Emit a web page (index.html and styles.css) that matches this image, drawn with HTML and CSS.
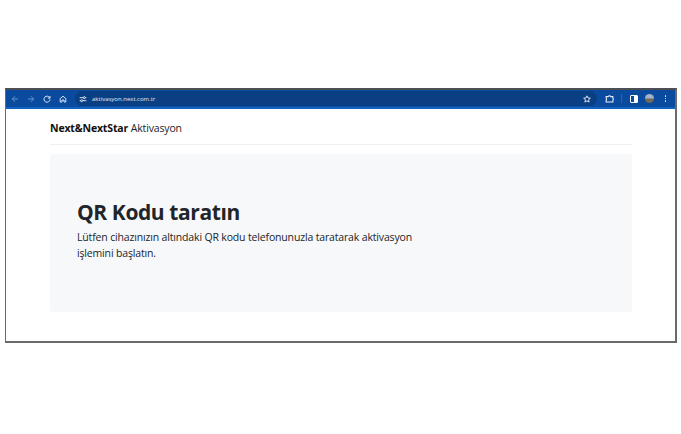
FILE: index.html
```html
<!DOCTYPE html>
<html lang="tr">
<head>
<meta charset="utf-8">
<title>Aktivasyon</title>
<link rel="stylesheet" href="styles.css">
</head>
<body>
<div class="window">
  <div class="toolbar">
    <div class="nav">
      <svg class="icon dim" viewBox="0 0 12 12"><path d="M10.500 6H2M6 2 2 6l4 4"/></svg>
      <svg class="icon dim" viewBox="0 0 12 12"><path d="M1.500 6H10M6 2l4 4-4 4"/></svg>
      <svg class="icon" viewBox="0 0 12 12"><path d="M10 4.200A4.500 4.500 0 1 0 10.500 6.500M10.500 1.500v3.200H7.300"/></svg>
      <svg class="icon" viewBox="0 0 12 12"><path d="M1.800 5.300 6 1.800l4.200 3.500v5.200H7.500V7.500h-3v3H1.800z"/></svg>
    </div>
    <div class="omnibox">
      <svg class="icon tune" viewBox="0 0 12 12"><path d="M1 4h5.500M9.500 4H11M1 8.500h1.500M5.500 8.500H11"/><circle cx="8" cy="4" r="1.500"/><circle cx="4" cy="8.500" r="1.500"/></svg>
      <span class="url">aktivasyon.next.com.tr</span>
      <svg class="icon" viewBox="0 0 12 12"><path d="m6 1.200 1.500 3.200 3.500.4-2.600 2.300.7 3.500L6 8.800 2.900 10.600l.7-3.500L1 4.800l3.500-.4z"/></svg>
    </div>
    <div class="actions">
      <svg class="icon ext" viewBox="0 0 12 12"><path d="M1.500 3.500h2.800a1.800 1.800 0 0 1 3.400 0h2.800v2.300a1.600 1.600 0 0 1 0 2.600v2.300H1.500V8.400a1.600 1.600 0 0 0 0-2.600z"/></svg>
      <span class="sep"></span>
      <span class="panel"><span class="panel-side"></span></span>
      <span class="avatar"></span>
      <span class="kebab"><i></i><i></i><i></i></span>
    </div>
  </div>
  <main class="page">
    <header class="brand"><strong>Next&amp;NextStar</strong> Aktivasyon</header>
    <section class="card">
      <h1>QR Kodu taratın</h1>
      <p>Lütfen cihazınızın altındaki QR kodu telefonunuzla taratarak aktivasyon işlemini başlatın.</p>
    </section>
  </main>
</div>
</body>
</html>
```
FILE: styles.css
```css
* { box-sizing: border-box; }
html, body { margin: 0; background: #fff; }
body { height: 434px; padding: 88px 4px 0 5px; font-family: "Open Sans", "Noto Sans", sans-serif; overflow: hidden; }
.window { height: 255px; border: 2px solid #6a6a6a; border-left-width: 1px; border-top-color: #4c5055; background: #fff; display: flex; flex-direction: column; }
.toolbar { height: 19px; flex: none; background: #0a4b9f; border-bottom: 2px solid #1262c4; display: flex; align-items: center; padding: 0 8px 0 5px; }
.nav { display: flex; gap: 8px; align-items: center; }
.icon { width: 8px; height: 8px; fill: none; stroke: #e8eef8; stroke-width: 1.400; display: block; flex: none; }
.icon.dim { stroke: #6f97d0; }
.omnibox { flex: 1; height: 15px; margin-left: 8px; background: #0a3f83; border-radius: 8px; display: flex; align-items: center; padding: 0 6px 0 4px; }
.url { margin-left: 5px; font-size: 6px; color: #e2eaf6; flex: 1; }
.actions { display: flex; align-items: center; margin-left: 8px; }
.ext { width: 9px; height: 9px; }
.sep { width: 1px; height: 9px; background: #2d62ab; margin: 0 8px 0 7px; }
.panel { width: 8px; height: 8px; background: #0a4b9f; border: 1px solid #fff; border-radius: 1px; display: flex; justify-content: flex-end; }
.panel-side { width: 3px; background: #fff; }
.avatar { width: 9px; height: 9px; border-radius: 50%; margin-left: 7px; background: linear-gradient(#a3b3cc 0 40%, #6f6a58 60% 100%); }
.kebab { display: flex; flex-direction: column; gap: 1px; margin-left: 10px; width: 3px; align-items: center; }
.kebab i { width: 1.500px; height: 1.500px; background: #dfe8f5; border-radius: 50%; }
.page { flex: 1; padding: 0 43px 0 44px; }
.brand { height: 36px; padding-top: 11px; font-size: 10.500px; line-height: 16px; letter-spacing: -0.15px; color: #212529; border-bottom: 1px solid #eff0f1; }
.brand strong { font-weight: 700; color: #111; }
.card { margin-top: 9px; height: 158px; background: #f7f8fa; border-radius: 3px; padding: 44px 27px 0; }
.card h1 { margin: 0; font-size: 21px; line-height: 29px; font-weight: 700; letter-spacing: -0.4px; color: #212529; }
.card p { margin: 2px 0 0; width: 345px; font-size: 10.500px; letter-spacing: -0.16px; line-height: 16px; color: #212529; }
```
